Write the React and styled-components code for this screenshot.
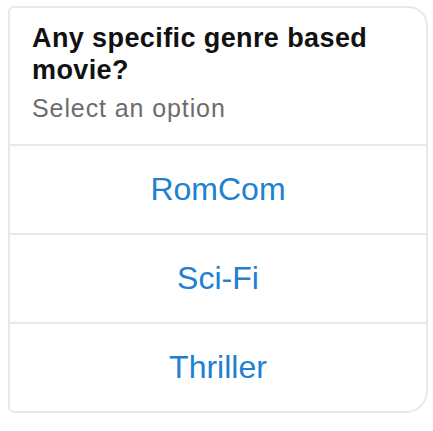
import React from "react";
import styled, { createGlobalStyle } from "styled-components";

const GlobalStyle = createGlobalStyle`
  body {
    margin: 0;
    background: #ffffff;
    font-family: "Liberation Sans", Arial, sans-serif;
  }
`;

const Page = styled.div`
  padding: 6px 0 0 8px;
`;

const Card = styled.div`
  width: 420px;
  box-sizing: border-box;
  border: 2px solid #e8e8e8;
  border-radius: 6px 20px 22px 6px;
  background: #ffffff;
  overflow: hidden;
`;

const Header = styled.div`
  padding: 14px 22px 22px;
`;

const Title = styled.h2`
  margin: 0;
  font-size: 27px;
  line-height: 32px;
  font-weight: 700;
  letter-spacing: 0.4px;
  color: #111111;
`;

const Subtitle = styled.div`
  margin-top: 8px;
  font-size: 25px;
  line-height: 28px;
  letter-spacing: 0.9px;
  color: #6d6d6d;
`;

const Option = styled.button`
  display: flex;
  align-items: center;
  justify-content: center;
  width: 100%;
  height: 89px;
  box-sizing: border-box;
  border: none;
  border-top: 2px solid #e8e8e8;
  background: transparent;
  font-family: inherit;
  font-size: 32px;
  color: #2180cf;
  cursor: pointer;
  padding: 0;
`;

const options = ["RomCom", "Sci-Fi", "Thriller"];

const App = () => {
  return (
    <Page>
      <GlobalStyle />
      <Card>
        <Header>
          <Title>Any specific genre based movie?</Title>
          <Subtitle>Select an option</Subtitle>
        </Header>
        {options.map(o => (
          <Option key={o}>{o}</Option>
        ))}
      </Card>
    </Page>
  );
};

export default App;
